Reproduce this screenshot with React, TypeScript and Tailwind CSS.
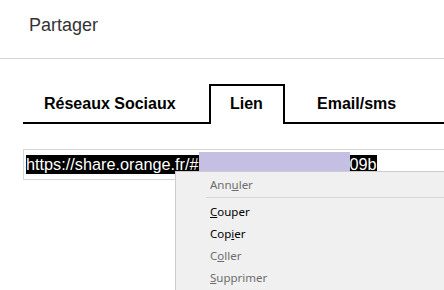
import React from "react";

export default function App() {
  const arial = { fontFamily: '"Liberation Sans", Arial, sans-serif' };
  return (
    <div
      className="relative w-[444px] h-[290px] overflow-hidden bg-white"
      style={arial}
    >
      <div className="h-[59px] border-b border-[#d4d4d4] pt-[15px] pl-[29px] text-[18px] leading-[21px] text-[#333333]">
        Partager
      </div>

      <div className="mt-[25px] flex h-[40px] pl-[23px] text-[16px] font-bold leading-[18px] text-black">
        <div className="w-[186px] border-b-2 border-black pl-[21px] pt-[11px]">
          Réseaux Sociaux
        </div>
        <div className="w-[76px] border-x-2 border-t-2 border-black pl-[19px] pt-[9px]">
          Lien
        </div>
        <div className="flex-1 border-b-2 border-black pl-[32px] pt-[11px]">
          Email/sms
        </div>
      </div>

      <div className="ml-[23px] mt-[25px] flex h-[31px] w-[440px] items-center border border-[#d6d6d6] pl-[2px] text-[16.25px] leading-[19px] whitespace-nowrap">
        <span className="bg-black text-white">https://share.orange.fr/#</span>
        <span className="relative inline-block h-[19px] w-[151px]">
          <span className="absolute left-0 top-[-3px] h-[24px] w-[151px] bg-[#c5bfe3]" />
        </span>
        <span className="bg-black text-white">09b</span>
      </div>

      <div
        className="absolute left-[175px] top-[171px] w-[290px] h-[140px] border border-[#cccccc] bg-[#f0f0f0] pt-[2px] text-[11.5px]"
        style={{ fontFamily: '"Noto Sans", "Open Sans", sans-serif' }}
      >
        <div className="flex h-[22px] items-center pl-[34px] text-[#6d6d6d]">
          <span>
            Ann<span className="underline">u</span>ler
          </span>
        </div>
        <div className="ml-[30px] mt-[1px] mb-[3px] h-px bg-[#d7d7d7]" />
        <div className="flex h-[22px] items-center pl-[34px] text-black">
          <span>
            <span className="underline">C</span>ouper
          </span>
        </div>
        <div className="flex h-[22px] items-center pl-[34px] text-black">
          <span>
            Cop<span className="underline">i</span>er
          </span>
        </div>
        <div className="flex h-[22px] items-center pl-[34px] text-[#6d6d6d]">
          <span>
            C<span className="underline">o</span>ller
          </span>
        </div>
        <div className="flex h-[22px] items-center pl-[34px] text-[#6d6d6d]">
          <span>
            <span className="underline">S</span>upprimer
          </span>
        </div>
      </div>
    </div>
  );
}
